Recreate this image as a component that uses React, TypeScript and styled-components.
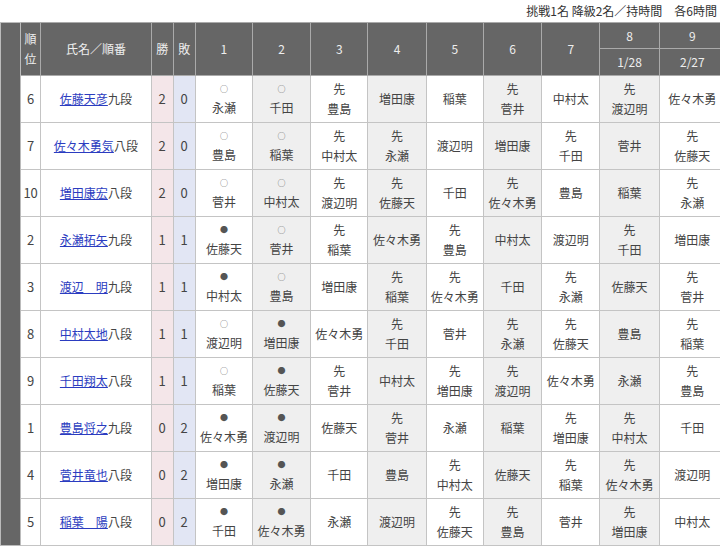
import React from "react";
import styled, { createGlobalStyle } from "styled-components";

const Global = createGlobalStyle`
  html, body { margin: 0; padding: 0; background: #fff; overflow: hidden; }
  body {
    font-family: "Noto Sans CJK JP", "Noto Sans", sans-serif;
    font-size: 12px;
    color: #444;
  }
`;

const Page = styled.div`
  width: 720px;
  overflow: hidden;
`;

const Caption = styled.div`
  height: 22px;
  line-height: 22px;
  text-align: right;
  padding-right: 3px;
  font-size: 12px;
  color: #333;
`;

const Table = styled.table`
  border-collapse: collapse;
  table-layout: fixed;
  width: 726px;
`;

const HeadCell = styled.th<{ $h?: number; $wrap?: boolean }>`
  background: #666;
  color: #eee;
  font-weight: normal;
  font-size: 12px;
  border: 1px solid #aaa;
  text-align: center;
  padding: 0;
  line-height: 20px;
  white-space: ${(p) => (p.$wrap ? "normal" : "nowrap")};
  height: ${(p) => (p.$h ? `${p.$h}px` : "auto")};
`;

const SideBar = styled.td`
  background: #666;
  border: 1px solid #bbb;
  padding: 0;
`;

type Tone = "white" | "gray" | "win" | "loss";
const toneBg: Record<Tone, string> = {
  white: "#fff",
  gray: "#efefef",
  win: "#f4e6e9",
  loss: "#e2e6f4",
};

const Cell = styled.td<{ $tone?: Tone; $num?: boolean }>`
  background: ${(p) => toneBg[p.$tone ?? "white"]};
  border: 1px solid #c4c4c4;
  text-align: center;
  vertical-align: middle;
  padding: 0;
  line-height: 20px;
  font-size: ${(p) => (p.$num ? "13px" : "12px")};
  color: #444;
  white-space: nowrap;
`;

const BodyRow = styled.tr`
  height: 47px;
`;

const NameLink = styled.a`
  color: #2b3cc0;
  text-decoration: underline;
`;

const Mark = styled.span`
  display: block;
  font-size: 8px;
  line-height: 18px;
  color: #555;
`;

const Line = styled.span`
  display: block;
`;

type Player = {
  rank: string;
  name: string;
  title: string;
  w: number;
  l: number;
  games: string[];
};

const players: Player[] = [
  { rank: "6", name: "佐藤天彦", title: "九段", w: 2, l: 0, games: ["○永瀬", "○千田", "先豊島", "増田康", "稲葉", "先菅井", "中村太", "先渡辺明", "佐々木勇"] },
  { rank: "7", name: "佐々木勇気", title: "八段", w: 2, l: 0, games: ["○豊島", "○稲葉", "先中村太", "先永瀬", "渡辺明", "増田康", "先千田", "菅井", "先佐藤天"] },
  { rank: "10", name: "増田康宏", title: "八段", w: 2, l: 0, games: ["○菅井", "○中村太", "先渡辺明", "先佐藤天", "千田", "先佐々木勇", "豊島", "稲葉", "先永瀬"] },
  { rank: "2", name: "永瀬拓矢", title: "九段", w: 1, l: 1, games: ["●佐藤天", "○菅井", "先稲葉", "佐々木勇", "先豊島", "中村太", "渡辺明", "先千田", "増田康"] },
  { rank: "3", name: "渡辺　明", title: "九段", w: 1, l: 1, games: ["●中村太", "○豊島", "増田康", "先稲葉", "先佐々木勇", "千田", "先永瀬", "佐藤天", "先菅井"] },
  { rank: "8", name: "中村太地", title: "八段", w: 1, l: 1, games: ["○渡辺明", "●増田康", "佐々木勇", "先千田", "菅井", "先永瀬", "先佐藤天", "豊島", "先稲葉"] },
  { rank: "9", name: "千田翔太", title: "八段", w: 1, l: 1, games: ["○稲葉", "●佐藤天", "先菅井", "中村太", "先増田康", "先渡辺明", "佐々木勇", "永瀬", "先豊島"] },
  { rank: "1", name: "豊島将之", title: "九段", w: 0, l: 2, games: ["●佐々木勇", "●渡辺明", "佐藤天", "先菅井", "永瀬", "稲葉", "先増田康", "先中村太", "千田"] },
  { rank: "4", name: "菅井竜也", title: "八段", w: 0, l: 2, games: ["●増田康", "●永瀬", "千田", "豊島", "先中村太", "佐藤天", "先稲葉", "先佐々木勇", "渡辺明"] },
  { rank: "5", name: "稲葉　陽", title: "八段", w: 0, l: 2, games: ["●千田", "●佐々木勇", "永瀬", "渡辺明", "先佐藤天", "先豊島", "菅井", "先増田康", "中村太"] },
];

const colWidths = [20, 20, 110, 22, 22, 57, 58, 57, 58, 57, 58, 58, 59, 66];

function Game({ text }: { text: string }) {
  const first = text[0];
  if (first === "○" || first === "●") {
    return (
      <>
        <Mark>{first}</Mark>
        <Line>{text.slice(1)}</Line>
      </>
    );
  }
  if (first === "先") {
    return (
      <>
        <Line>先</Line>
        <Line>{text.slice(1)}</Line>
      </>
    );
  }
  return <Line>{text}</Line>;
}

export default function App() {
  return (
    <Page>
      <Global />
      <Caption>挑戦1名 降級2名／持時間　各6時間</Caption>
      <Table>
        <colgroup>
          {colWidths.map((w, i) => (
            <col key={i} style={{ width: w }} />
          ))}
        </colgroup>
        <tbody>
          <tr>
            <SideBar rowSpan={12} />
            <HeadCell rowSpan={2} $wrap>順位</HeadCell>
            <HeadCell rowSpan={2}>氏名／順番</HeadCell>
            <HeadCell rowSpan={2}>勝</HeadCell>
            <HeadCell rowSpan={2}>敗</HeadCell>
            {[1, 2, 3, 4, 5, 6, 7].map((n) => (
              <HeadCell key={n} rowSpan={2}>
                {n}
              </HeadCell>
            ))}
            <HeadCell $h={25}>8</HeadCell>
            <HeadCell $h={25}>9</HeadCell>
          </tr>
          <tr>
            <HeadCell $h={26}>1/28</HeadCell>
            <HeadCell $h={26}>2/27</HeadCell>
          </tr>
          {players.map((p) => (
            <BodyRow key={p.rank}>
              <Cell $num>{p.rank}</Cell>
              <Cell>
                <NameLink href="#">{p.name}</NameLink>
                {p.title}
              </Cell>
              <Cell $tone="win" $num>{p.w}</Cell>
              <Cell $tone="loss" $num>{p.l}</Cell>
              {p.games.map((g, i) => (
                <Cell key={i} $tone={i % 2 === 1 ? "gray" : "white"}>
                  <Game text={g} />
                </Cell>
              ))}
            </BodyRow>
          ))}
        </tbody>
      </Table>
    </Page>
  );
}
